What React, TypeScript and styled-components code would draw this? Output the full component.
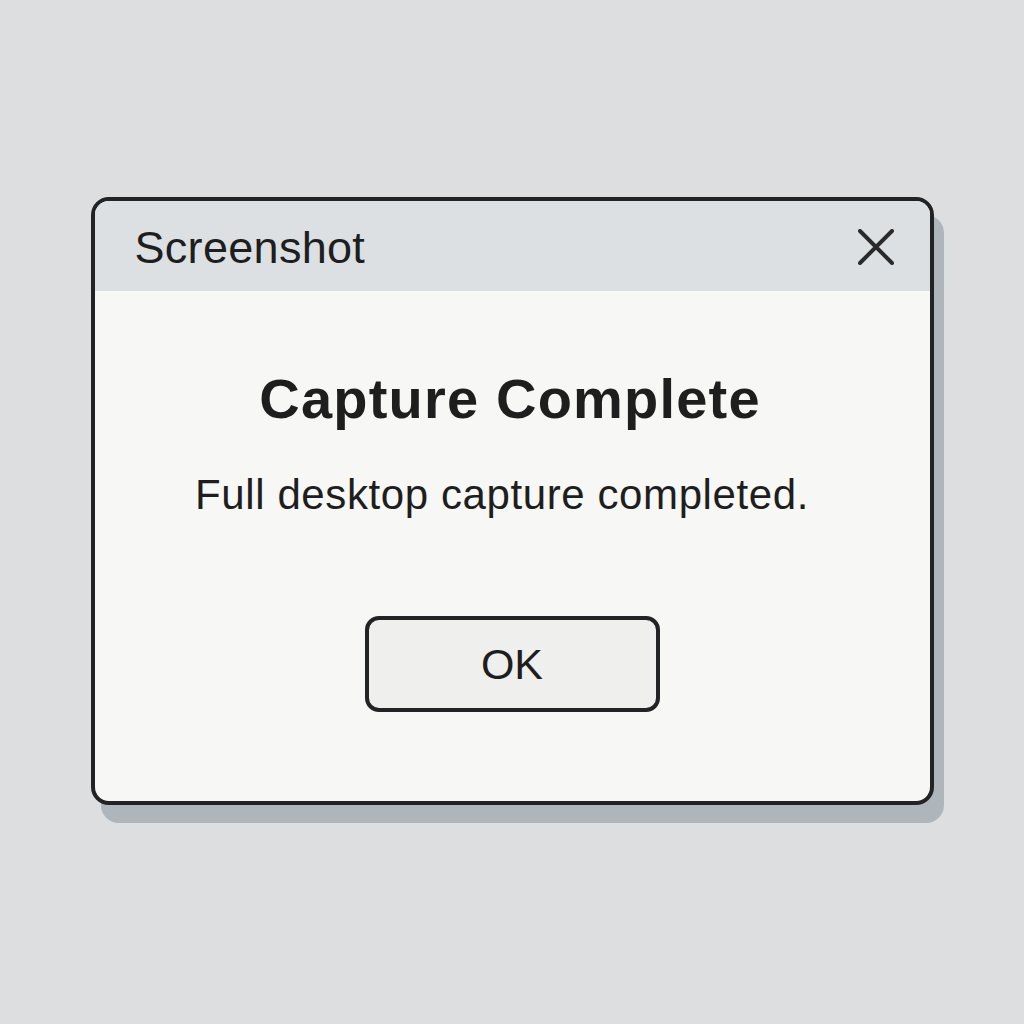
import React from "react";
import styled, { createGlobalStyle } from "styled-components";

const GlobalStyle = createGlobalStyle`
  html, body {
    margin: 0;
    padding: 0;
    background: #dcdedf;
  }
  body {
    font-family: "Liberation Sans", Arial, sans-serif;
    color: #1e1e1e;
  }
`;

const Page = styled.main`
  display: flex;
  justify-content: center;
  align-items: flex-start;
  width: 1024px;
  height: 1024px;
  padding-top: 197px;
  box-sizing: border-box;
`;

const Dialog = styled.section`
  display: flex;
  flex-direction: column;
  width: 843px;
  height: 608px;
  box-sizing: border-box;
  border: 4px solid #222324;
  border-radius: 18px;
  overflow: hidden;
  background: #f7f7f5;
  box-shadow: 10px 18px 0 0 #aeb5bb;
`;

const TitleBar = styled.header`
  display: flex;
  align-items: center;
  justify-content: space-between;
  height: 90px;
  flex-shrink: 0;
  box-sizing: border-box;
  padding: 2px 34px 0 40px;
  background: #dde0e3;
`;

const Title = styled.h1`
  margin: 0;
  font-size: 45px;
  font-weight: 400;
  letter-spacing: 0.3px;
  line-height: 1;
  color: #1e1e1e;
`;

const CloseButton = styled.button`
  display: flex;
  align-items: center;
  justify-content: center;
  width: 40px;
  height: 40px;
  padding: 0;
  border: 0;
  background: transparent;
  color: #2a2a2a;
  cursor: pointer;
`;

const Body = styled.div`
  display: flex;
  flex-direction: column;
  align-items: center;
  padding-top: 80px;
`;

const Heading = styled.h2`
  margin: 0 4px 0 0;
  font-size: 56px;
  font-weight: 700;
  letter-spacing: 1.2px;
  line-height: 1;
  color: #1e1e1e;
`;

const Message = styled.p`
  margin: 47px 20px 0 0;
  font-size: 42px;
  letter-spacing: 0.6px;
  line-height: 1;
  color: #1e1e1e;
`;

const OkButton = styled.button`
  display: flex;
  align-items: center;
  justify-content: center;
  margin-top: 100px;
  width: 295px;
  height: 96px;
  box-sizing: border-box;
  border: 4px solid #222324;
  border-radius: 14px;
  background: #efefee;
  font-family: inherit;
  font-size: 43px;
  line-height: 1;
  color: #1e1e1e;
  cursor: pointer;
`;

function App() {
  return (
    <Page>
      <GlobalStyle />
      <Dialog role="dialog" aria-labelledby="dlg-title">
        <TitleBar>
          <Title id="dlg-title">Screenshot</Title>
          <CloseButton aria-label="Close">
            <svg width="36" height="36" viewBox="0 0 36 36" fill="none">
              <path
                d="M2 2L34 34M34 2L2 34"
                stroke="currentColor"
                strokeWidth="4"
                strokeLinecap="round"
              />
            </svg>
          </CloseButton>
        </TitleBar>
        <Body>
          <Heading>Capture Complete</Heading>
          <Message>Full desktop capture completed.</Message>
          <OkButton>OK</OkButton>
        </Body>
      </Dialog>
    </Page>
  );
}

export default App;
